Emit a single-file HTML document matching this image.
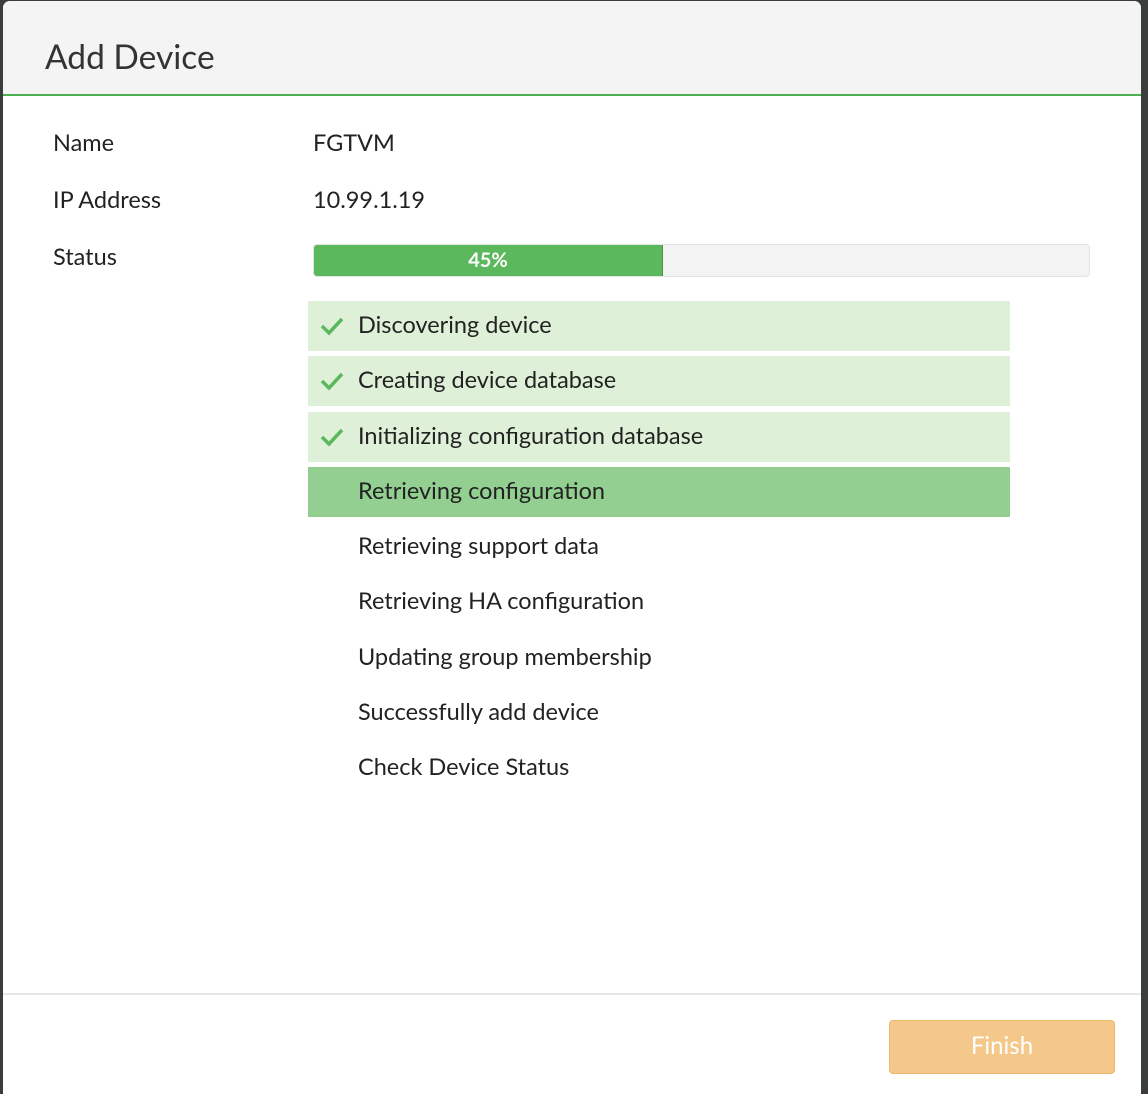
<!DOCTYPE html>
<html><head><style>
*{margin:0;padding:0;box-sizing:border-box}
body{width:1148px;height:1094px;background:#3a3d3c;position:relative;overflow:hidden;font-family:"Lato","Liberation Sans",sans-serif;color:#222}
.dlg{position:absolute;left:3px;top:1px;width:1138px;height:1093px;background:#fff;border-radius:7px 7px 0 0;overflow:hidden}
.hd{height:95px;background:#f4f4f4;border-bottom:2px solid #4caf50;}
.hd h1{position:absolute;left:42px;top:37px;font-size:33.5px;font-weight:normal;color:#333;line-height:38px}
.lbl{position:absolute;left:50px;font-size:23.5px;line-height:26px}
.val{position:absolute;left:310px;font-size:23.5px;line-height:26px}
.bar{position:absolute;left:310px;top:243px;width:777px;height:33px;background:#f3f3f3;border:1px solid #e4e4e4;border-radius:4px;overflow:hidden}
.fill{width:349px;height:100%;background:#5cb85c;border-right:1px solid #3d9a3d;color:#fff;font-weight:bold;font-size:20px;text-align:center;line-height:31px}
.it{position:absolute;left:305px;width:702px;height:50px;font-size:23.5px;line-height:48px;padding-left:50px}
.done{background:#dff0d8}
.cur{background:#92cf90}
.it svg{position:absolute;left:12px;top:15px}
.ft{position:absolute;left:0;top:992px;width:100%;height:2px;background:#e6e6e6}
.btn{position:absolute;left:886px;top:1019px;width:226px;height:54px;background:#f4c78a;border:1px solid #edb96e;border-radius:4px;color:#fff;font-size:24px;text-align:center;line-height:50px}
</style></head><body>
<div class="dlg">
<div class="hd"><h1>Add Device</h1></div>
<div class="lbl" style="top:129px">Name</div><div class="val" style="top:129px">FGTVM</div>
<div class="lbl" style="top:186px">IP Address</div><div class="val" style="top:186px">10.99.1.19</div>
<div class="lbl" style="top:243px">Status</div>
<div class="bar"><div class="fill">45%</div></div>
<div class="it done" style="top:300px"><svg width="24" height="20" viewBox="0 0 24 20"><path d="M2 10l7 7L22 3" fill="none" stroke="#5cb85c" stroke-width="3.5"/></svg>Discovering device</div>
<div class="it done" style="top:355px"><svg width="24" height="20" viewBox="0 0 24 20"><path d="M2 10l7 7L22 3" fill="none" stroke="#5cb85c" stroke-width="3.5"/></svg>Creating device database</div>
<div class="it done" style="top:411px"><svg width="24" height="20" viewBox="0 0 24 20"><path d="M2 10l7 7L22 3" fill="none" stroke="#5cb85c" stroke-width="3.5"/></svg>Initializing configuration database</div>
<div class="it cur" style="top:466px">Retrieving configuration</div>
<div class="it" style="top:521px">Retrieving support data</div>
<div class="it" style="top:576px">Retrieving HA configuration</div>
<div class="it" style="top:632px">Updating group membership</div>
<div class="it" style="top:687px">Successfully add device</div>
<div class="it" style="top:742px">Check Device Status</div>
<div class="ft"></div>
<div class="btn">Finish</div>
</div>
</body></html>
